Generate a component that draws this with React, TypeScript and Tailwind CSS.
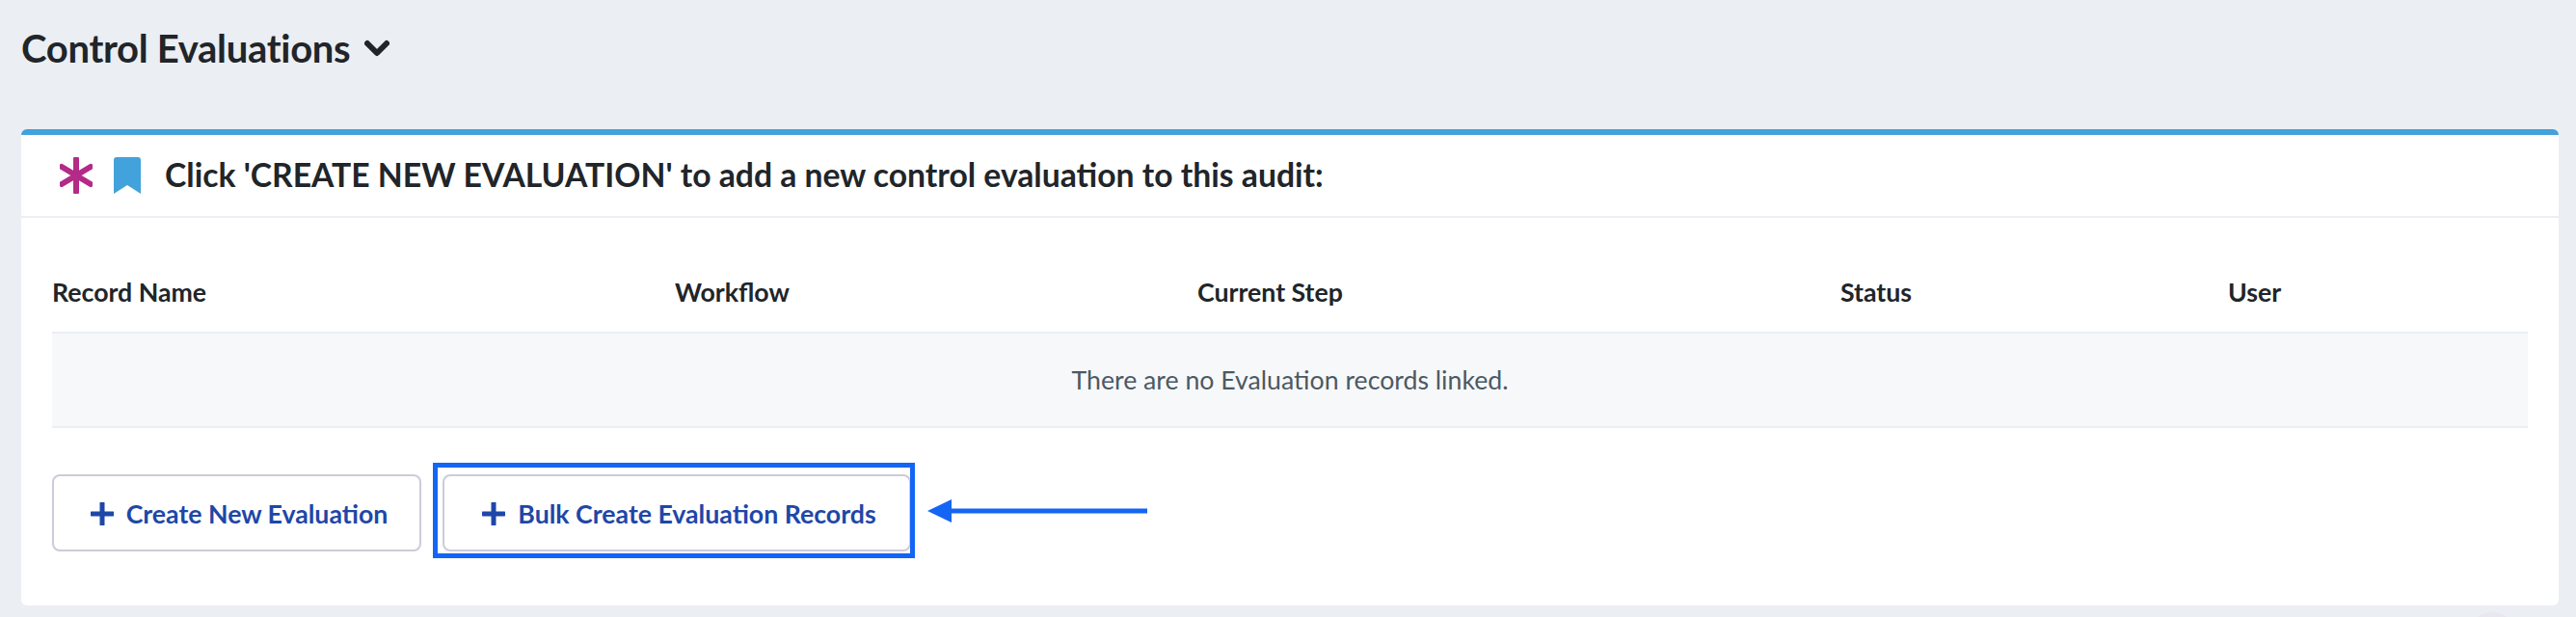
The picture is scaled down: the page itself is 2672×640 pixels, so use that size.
const font = "font-['Lato','Noto_Sans',sans-serif]";

const columns = ["Record Name", "Workflow", "Current Step", "Status", "User"];

function PlusIcon() {
  return (
    <svg width="24" height="24" viewBox="0 0 24 24" className="shrink-0">
      <path d="M12 1v22M1 12h22" stroke="#1e47a8" strokeWidth="5" strokeLinecap="round" />
    </svg>
  );
}

export default function App() {
  return (
    <div className={`relative h-[640px] w-full overflow-hidden bg-[#ebeef3] ${font} text-[#212529]`}>
      <div className="mb-[34px] flex h-[100px] items-center gap-[15px] pl-[22px]">
        <h1 className="text-[40px] leading-none font-bold tracking-[-0.3px]">Control Evaluations</h1>
        <svg width="26" height="18" viewBox="0 0 26 18">
          <path d="M3 4l10 10L23 4" fill="none" stroke="#212529" strokeWidth="6" strokeLinecap="round" strokeLinejoin="round" />
        </svg>
      </div>

      <div className="mr-[18px] ml-[22px] h-[494px] rounded-[6px] border-t-[6px] border-[#42a2db] bg-white">
        <div className="flex h-[86px] items-center border-b-2 border-[#ebeef3] pl-[40px]">
          <svg width="34" height="38" viewBox="0 0 34 38" className="shrink-0">
            <path d="M17 2v34M2 10l30 18M32 10L2 28" stroke="#b32a87" strokeWidth="6" strokeLinecap="round" />
          </svg>
          <svg width="28" height="38" viewBox="0 0 28 38" className="ml-[22px] shrink-0">
            <path d="M3 0h22a3 3 0 0 1 3 3v35L14 29 0 38V3a3 3 0 0 1 3-3z" fill="#42a2db" />
          </svg>
          <h2 className="ml-[25px] text-[33.7px] leading-none font-bold">
            Click 'CREATE NEW EVALUATION' to add a new control evaluation to this audit:
          </h2>
        </div>

        <div className="px-[32px] pt-[36px]">
          <div className="grid h-[82px] grid-cols-[646px_542px_667px_402px_311px] items-center">
            {columns.map((c) => (
              <div key={c} className="text-[26.7px] leading-none font-bold">
                {c}
              </div>
            ))}
          </div>
          <div className="flex h-[100px] items-center justify-center border-y-2 border-[#ebeef3] bg-[#f7f8fa] text-[26.7px] text-[#4b5a64]">
            There are no Evaluation records linked.
          </div>

          <div className="mt-[48px] flex gap-[22px]">
            <button className="flex h-[80px] w-[383px] items-center justify-center gap-[13px] rounded-[8px] border-2 border-[#cbccd9] pt-[2px] pl-[5px] text-[26.7px] font-bold text-[#1e47a8]">
              <PlusIcon />
              Create New Evaluation
            </button>
            <div className="relative">
              <button className="flex h-[80px] w-[486px] items-center justify-center gap-[13px] rounded-[8px] border-2 border-[#cbccd9] pt-[2px] pl-[5px] text-[26.7px] font-bold text-[#1e47a8]">
                <PlusIcon />
                Bulk Create Evaluation Records
              </button>
              <div className="absolute -top-[12px] -right-[4px] -bottom-[7px] -left-[10px] border-[5px] border-[#1565f5]" />
              <svg width="228" height="24" viewBox="0 0 228 24" className="absolute top-[26px] left-[503px]">
                <path d="M0 12L25 0v9.5h203v5H25V24z" fill="#1565f5" />
              </svg>
            </div>
          </div>
        </div>
      </div>

      <div className="absolute top-[635px] left-[2560px] h-[50px] w-[50px] rounded-full bg-[#e9e6f0]" />
    </div>
  );
}
